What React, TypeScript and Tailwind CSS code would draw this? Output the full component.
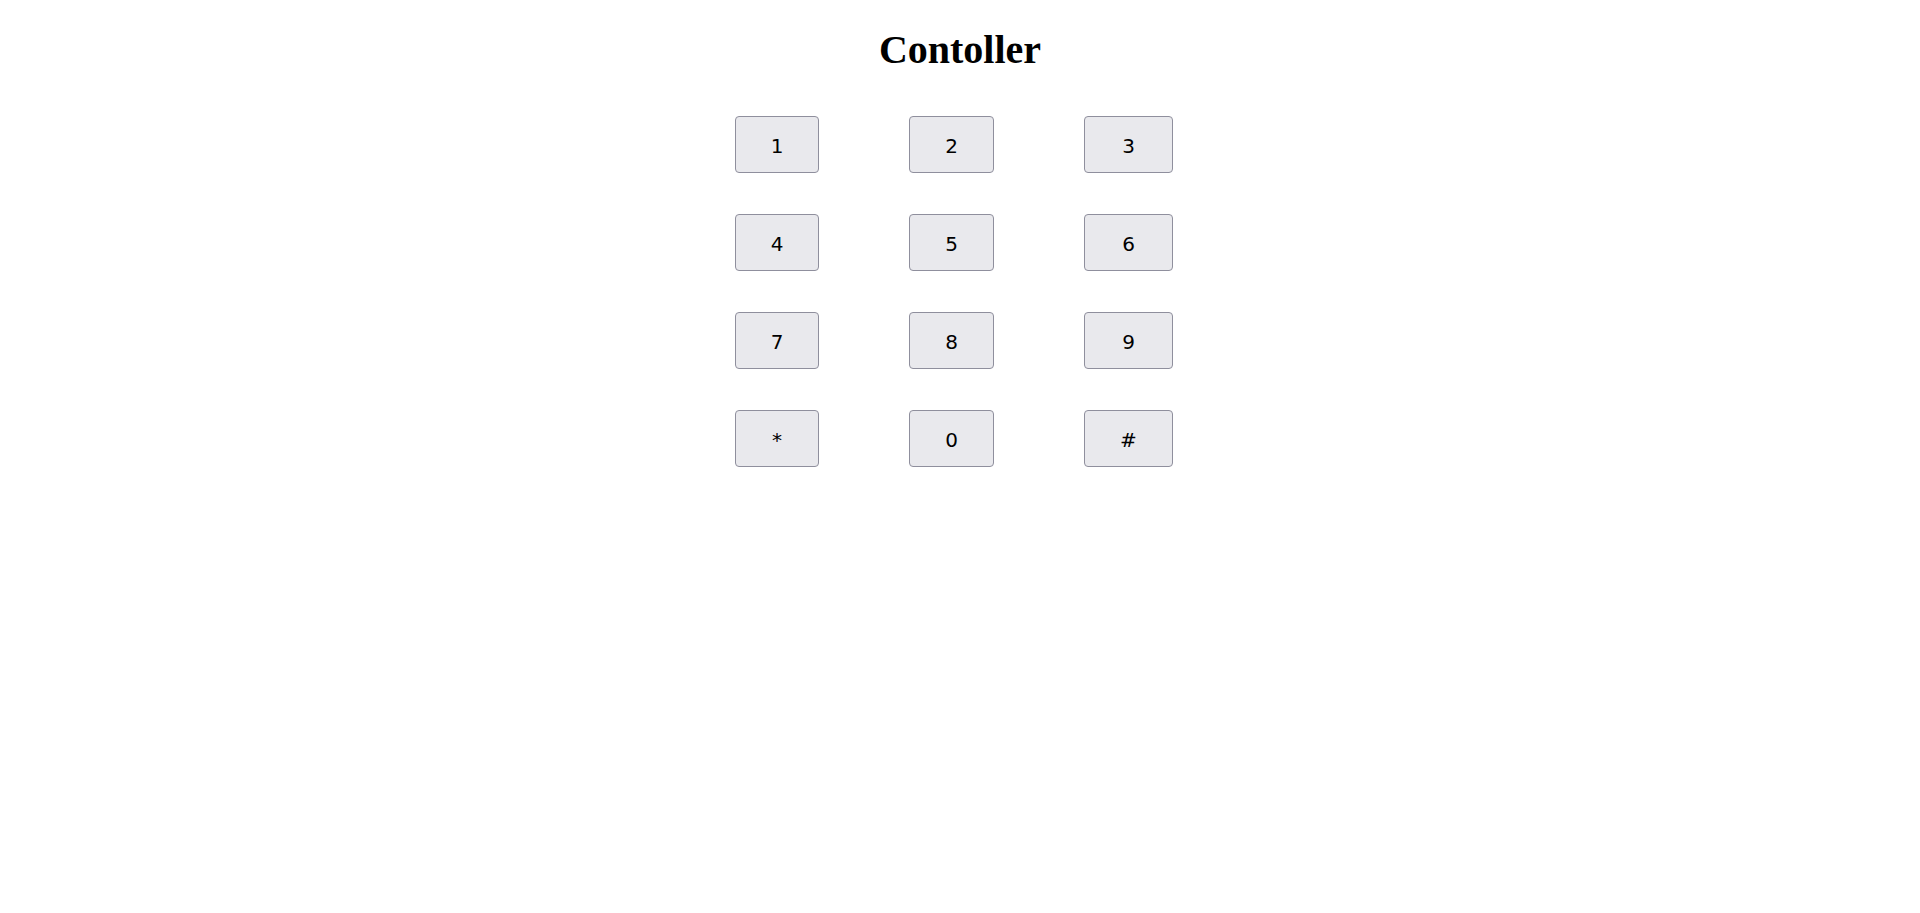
import React from 'react'

const keys = ['1', '2', '3', '4', '5', '6', '7', '8', '9', '*', '0', '#']

export default function App() {
  return (
    <div className="min-h-screen bg-white text-black">
      <h1 className="pt-[27px] text-center text-[40px] leading-[46px] font-bold font-['Liberation_Serif',serif]">
        Contoller
      </h1>
      <div className="mt-[43px] flex justify-center">
        <div className="mr-[12px] grid grid-cols-[84px_85px_89px] gap-x-[90px] gap-y-[41px]">
          {keys.map((k) => (
            <button
              key={k}
              className="flex h-[57px] items-center justify-center rounded-[4px] border border-[#8f8f9d] bg-[#e9e9ed] pt-[3px] text-black"
            >
              <span className="text-[20px] leading-none font-['DejaVu_Sans',sans-serif]">{k}</span>
            </button>
          ))}
        </div>
      </div>
    </div>
  )
}
